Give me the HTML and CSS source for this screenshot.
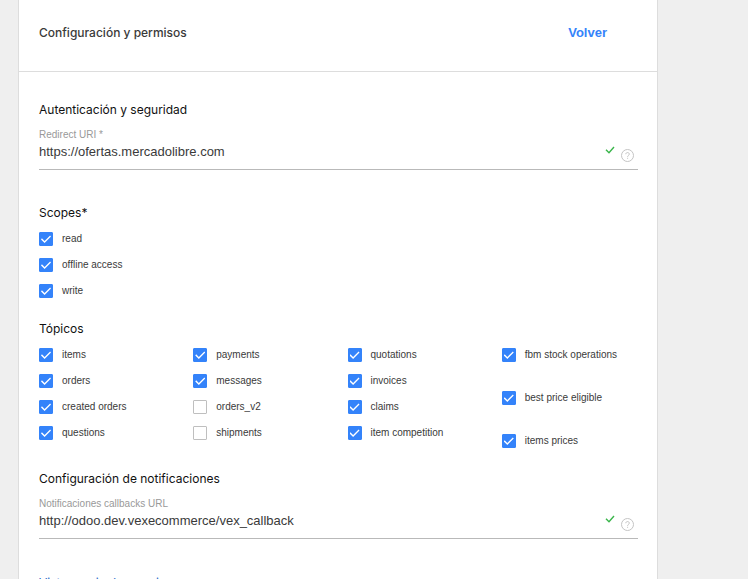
FILE: index.html
```html
<!DOCTYPE html>
<html lang="es">
<head>
<meta charset="utf-8">
<meta name="viewport" content="width=device-width, initial-scale=1">
<title>Configuración y permisos</title>
<link rel="stylesheet" href="styles.css">
</head>
<body>
<main class="panel">
  <header class="panel-header">
    <h1 class="title">Configuración y permisos</h1>
    <a class="back" href="#">Volver</a>
  </header>
  <form class="content">
    <section class="section">
      <h2 class="heading">Autenticación y seguridad</h2>
      <div class="field">
        <div class="field-main">
          <label class="field-label" for="redirect">Redirect URI *</label>
          <input class="field-input" id="redirect" type="text" value="https://ofertas.mercadolibre.com">
        </div>
        <svg class="valid" viewBox="0 0 10 8" aria-hidden="true"><path d="M1 3.800l3 3 5-5.800"/></svg>
        <button class="help" type="button" aria-label="Ayuda"><svg viewBox="0 0 13 13" aria-hidden="true"><circle cx="6.500" cy="6.500" r="6"/><path d="M4.800 5.200c0-2.200 3.500-2.200 3.500 0 0 1.200-1.700 1.200-1.700 2.600M6.600 8.800v1"/></svg></button>
      </div>
    </section>

    <fieldset class="section scopes">
      <legend class="heading">Scopes*</legend>
      <div class="options">
        <label class="option"><input type="checkbox" checked>read</label>
        <label class="option"><input type="checkbox" checked>offline access</label>
        <label class="option"><input type="checkbox" checked>write</label>
      </div>
    </fieldset>

    <fieldset class="section topics">
      <legend class="heading">Tópicos</legend>
      <div class="topic-grid">
        <div class="options">
          <label class="option"><input type="checkbox" checked>items</label>
          <label class="option"><input type="checkbox" checked>orders</label>
          <label class="option"><input type="checkbox" checked>created orders</label>
          <label class="option"><input type="checkbox" checked>questions</label>
        </div>
        <div class="options">
          <label class="option"><input type="checkbox" checked>payments</label>
          <label class="option"><input type="checkbox" checked>messages</label>
          <label class="option"><input type="checkbox">orders_v2</label>
          <label class="option"><input type="checkbox">shipments</label>
        </div>
        <div class="options">
          <label class="option"><input type="checkbox" checked>quotations</label>
          <label class="option"><input type="checkbox" checked>invoices</label>
          <label class="option"><input type="checkbox" checked>claims</label>
          <label class="option"><input type="checkbox" checked>item competition</label>
        </div>
        <div class="options options-loose">
          <label class="option"><input type="checkbox" checked>fbm stock operations</label>
          <label class="option"><input type="checkbox" checked>best price eligible</label>
          <label class="option"><input type="checkbox" checked>items prices</label>
        </div>
      </div>
    </fieldset>

    <section class="section">
      <h2 class="heading">Configuración de notificaciones</h2>
      <div class="field">
        <div class="field-main">
          <label class="field-label" for="callback">Notificaciones callbacks URL</label>
          <input class="field-input" id="callback" type="text" value="http://odoo.dev.vexecommerce/vex_callback">
        </div>
        <svg class="valid" viewBox="0 0 10 8" aria-hidden="true"><path d="M1 3.800l3 3 5-5.800"/></svg>
        <button class="help" type="button" aria-label="Ayuda"><svg viewBox="0 0 13 13" aria-hidden="true"><circle cx="6.500" cy="6.500" r="6"/><path d="M4.800 5.200c0-2.200 3.500-2.200 3.500 0 0 1.200-1.700 1.200-1.700 2.600M6.600 8.800v1"/></svg></button>
      </div>
      <a class="preview" href="#">Vista previa de permisos</a>
    </section>
  </form>
</main>
</body>
</html>
```
FILE: styles.css
```css
* { box-sizing: border-box; }
html { scrollbar-width: none; }
body {
  margin: 0;
  padding: 0 90px 0 18px;
  min-height: 100vh;
  display: flex;
  background: #efefef;
  color: #3a3a3a;
  font-family: "Liberation Sans", sans-serif;
  font-size: 13px;
}
.panel {
  flex: 1;
  background: #fff;
  border: solid #ddd;
  border-width: 0 1px;
}
.panel-header {
  display: flex;
  justify-content: space-between;
  align-items: center;
  padding: 24px 50px 30px 20px;
  border-bottom: 1px solid #ddd;
}
.title, .heading, .preview {
  margin: 0;
  padding: 0;
  font-family: Inter, sans-serif;
  font-size: 12px;
  font-weight: 400;
  line-height: 17px;
}
.title { font-weight: 500; }
.heading { color: #111; }
.back {
  color: #3483fa;
  font-weight: bold;
  text-decoration: none;
}
.content { padding: 29px 19px 0 20px; }
.section {
  margin: 0;
  padding: 0;
  border: 0;
}
.field {
  display: flex;
  align-items: flex-end;
  margin-top: 10px;
  padding-bottom: 5px;
  border-bottom: 1px solid #b9b9b9;
}
.field-main { flex: 1; }
.field-label {
  display: block;
  color: #999;
  font-size: 10px;
  line-height: 14px;
}
.field-input {
  display: block;
  width: 100%;
  margin-bottom: 2px;
  padding: 0;
  border: 0;
  outline: 0;
  background: none;
  color: #3a3a3a;
  font: inherit;
  line-height: 20px;
}
.valid {
  width: 10px;
  height: 8px;
  margin: 0 6px 10px 0;
  fill: none;
  stroke: #39b54a;
  stroke-width: 1.4;
}
.help {
  width: 13px;
  height: 13px;
  margin: 0 4px 2px 0;
  padding: 0;
  border: 0;
  background: none;
}
.help svg {
  display: block;
  fill: none;
  stroke: #c4c4c4;
}
.scopes { margin-top: 34px; }
.topics { margin: 22px 0; }
.options {
  display: flex;
  flex-direction: column;
  gap: 12px;
}
.scopes .options { padding-top: 11px; }
.topic-grid {
  display: grid;
  grid-template-columns: repeat(4, 1fr);
  gap: 0 18px;
  padding-top: 11px;
}
.options-loose { gap: 29px; }
.option {
  display: flex;
  align-items: center;
  gap: 9px;
  font-size: 10px;
  line-height: 14px;
  white-space: nowrap;
}
.option input {
  appearance: none;
  display: grid;
  place-items: center;
  width: 14px;
  height: 14px;
  margin: 0;
  border: 1px solid #bfbfbf;
  border-radius: 1px;
}
.option input:checked {
  border-color: #3483fa;
  background: #3483fa;
}
.option input:checked::before {
  content: "";
  width: 10px;
  height: 8px;
  background: #fff;
  clip-path: polygon(0 55%, 9% 42%, 36% 74%, 91% 6%, 100% 18%, 36% 100%);
}
.preview {
  display: block;
  margin-top: 35px;
  color: #2968c8;
  text-decoration: none;
}
```
